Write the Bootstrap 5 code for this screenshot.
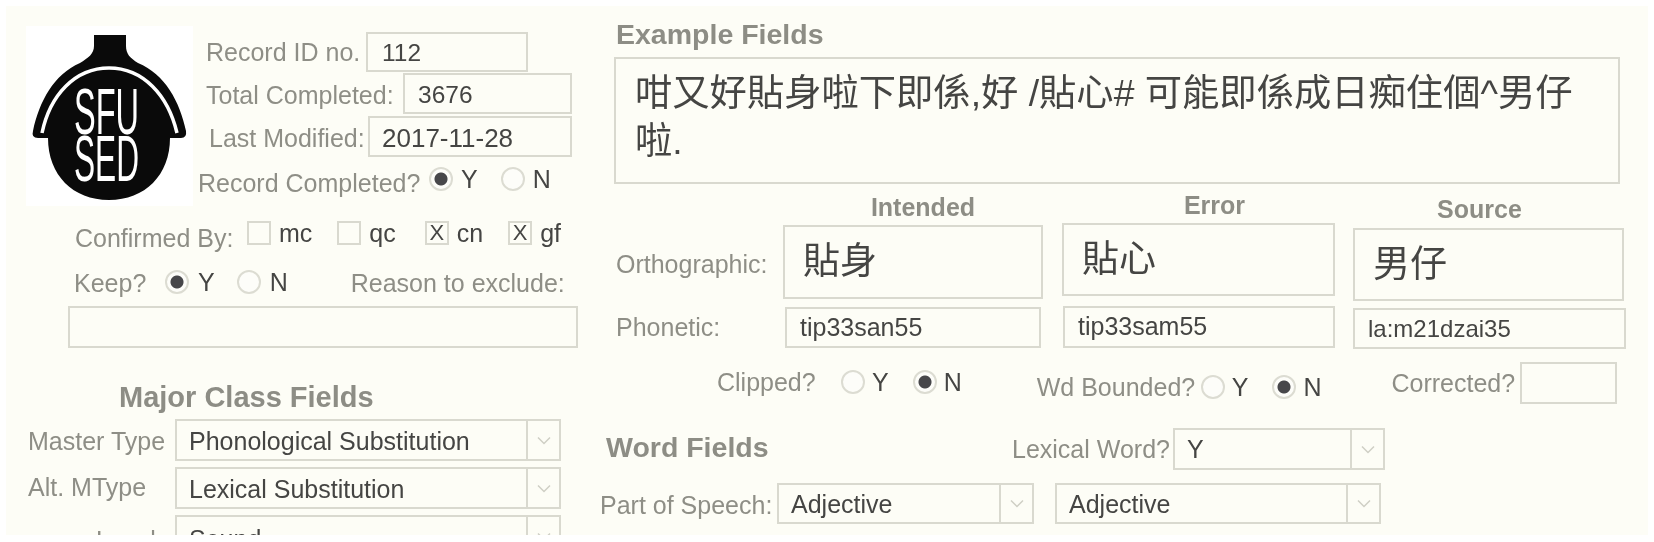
<!DOCTYPE html>
<html lang="en">
<head>
<meta charset="utf-8">
<title>SFU SED record</title>
<link href="https://cdn.jsdelivr.net/npm/bootstrap@5.3.0/dist/css/bootstrap.min.css" rel="stylesheet">
<style>
html,body{background:#fff;margin:0;overflow:hidden}
body{font-family:"Liberation Sans","Noto Sans CJK TC",sans-serif}
.sheet{margin:6px 6px 7px;height:529px;width:1642px;overflow:hidden;background:#fdfdf6;filter:blur(.5px);color:#8e8e86;font-size:25px}
.leftcol{width:590px;flex:none}
.rightcol{flex:1;min-width:0}
.lbl{white-space:nowrap;line-height:1;flex:none}
.sect{font-weight:700;font-size:28.5px;color:#8d8d85;white-space:nowrap;line-height:1}
.ctl{border:2px solid #d9d9cf;background:#fdfdf6;color:#454543;font-size:25px;display:flex;align-items:center;flex:none;white-space:nowrap;padding-left:13px}
.rd{appearance:none;width:24px;height:24px;border-radius:50%;border:2px solid #dcdcd2;background:#fdfdf9;margin:0;flex:none;display:block}
.rd:checked{background:radial-gradient(circle,#47474a 0 6px,#fdfdf9 7px)}
.val{color:#454543;line-height:1;font-size:25px;flex:none}
.bx{width:24px;height:24px;border:2px solid #d9d9cf;flex:none;color:#454543;font-size:22px;line-height:20px;text-align:center;background:#fdfdf6}
.sel{border:2px solid #d9d9cf;background:#fdfdf6;color:#454543;font-size:25px;display:flex;flex:none;white-space:nowrap;align-items:stretch}
.sel-t{flex:1;padding:2px 0 0 12px;display:flex;align-items:center;min-width:0}
.sel-c{width:33px;border-left:2px solid #d9d9cf;display:flex;align-items:center;justify-content:center;flex:none}
.logo{width:167px;height:180px;margin:20px 0 0 20px;background:#fff;flex:none;display:block}
.logo-t{font-family:"Liberation Sans",sans-serif;fill:#fff;font-size:65px}
/* left head */
.hf{flex:1;padding-top:26px}
.h1r{height:40px;padding-left:13px}.h1r .lbl{width:160px;padding-top:1px}.h1r .ctl{width:162px;height:40px;font-size:24.5px;padding:2px 0 0 14px}
.h2r{height:41px;margin-top:1px;padding-left:13px}.h2r .lbl{width:197px;padding-top:3px}.h2r .ctl{width:169px;height:41px;font-size:24.5px;padding-top:3px}
.h3r{height:41px;margin-top:2px;padding-left:16px}.h3r .lbl{width:159px;padding-top:3px}.h3r .ctl{width:204px;height:41px;font-size:26px;padding:3px 0 0 12px}
.h4r{height:34px;margin-top:5px;padding-left:5px}.h4r .lbl{width:231px;padding-top:9px}
.h4r .val{margin:0 0 0 8px}.h4r .gapn{margin-left:23px}
/* left lower */
.cfr{height:32px;margin-top:11px;padding-left:69px}.cfr .lbl{width:162px;padding-top:10px}
.cfm{margin-left:10px}.cf2{margin-left:25px}.cf3{margin-left:29px}.cf4{margin-left:25px}
.kpr{height:30px;margin-top:18px;padding-left:68px}.kpr .lbl{width:91px;padding-top:2px}
.kpr .val{margin-left:9px}.kpn{margin-left:22px}.kpx{margin-left:63px}
.rsn{height:42px;width:510px;margin:9px 0 0 62px}
.mjr{margin:30px 0 0 113px;height:41px;line-height:38px;white-space:nowrap;font-size:29px}
.lsel{height:42px;padding-left:22px}.lsel .lbl{width:147px;padding-top:2px}.lsel .sel{width:386px;height:42px}
.lsel .sel-t{padding-top:4px}
.ls2{margin-top:6px}.ls2 .lbl{padding:0 0 2px}.ls3{margin-top:6px}.ls3 .lbl{padding:8px 0 0 68px}.lsel.ls3 .sel-t{padding-top:7px}
/* right */
.ttl{height:51px;line-height:56px;padding-left:20px}
.ex{width:1006px;height:127px;margin-left:18px;border:2px solid #d9d9cf;font-size:37.3px;line-height:48px;color:#454543;padding:10px 19px}
.hdr{height:39px}
.hc{font-weight:700;font-size:25px;color:#8d8d85;line-height:42px;text-align:center;flex:none}
.hc1{width:260px;margin-left:187px;margin-top:2px;padding-left:20px}
.hc2{width:273px;margin-left:19px;padding-left:32px}
.hc3{width:271px;margin-left:18px;margin-top:4px;padding-right:18px}
.orr{height:78px;padding-left:20px}.orr .lbl{width:167px;margin-top:29px}
.big{font-size:37px;height:74px;padding-left:18px}
.o1{width:260px;margin-top:2px}.o2{width:273px;margin-left:19px;height:73px}.o3{width:271px;margin-left:18px;margin-top:5px;height:73px}
.phr{height:43px;margin-top:5px;padding-left:20px}.phr .lbl{width:169px;margin-top:9px}
.p1{width:256px;height:41px;margin-top:1px}.p2{width:272px;margin-left:22px;height:42px}.p3{width:273px;margin-left:18px;margin-top:2px;height:41px;font-size:24px}
.rdr{height:55px;position:static}
.gc{margin:17px 0 0 121px;height:32px}.gc .lbl{width:124px}
.gv{margin-left:7px}.gn{margin-left:24px}.gn2{margin-left:24px}
.gw{margin:22px 0 0 75px;height:32px}.gw .lbl{width:164px}
.gf{margin:13px 0 0 70px}.gf .lbl{width:128px}.gf .ctl{width:97px;height:42px}
.wdr{height:42px;margin-top:24px}
.wdt{margin:1px 0 0 10px;width:406px;height:36px;line-height:36px}
.lxs{width:161px}.lx{width:212px;height:42px}
.psr{height:41px;margin-top:13px;padding-left:4px}.psr .lbl{width:177px;padding-top:3px}
.ps1{width:257px;height:41px}.ps2{width:326px;height:41px;margin-left:21px}
</style>
</head>
<body>
<div class="sheet d-flex">
  <div class="leftcol">
    <div class="d-flex">
      <svg class="logo" viewBox="26 26 167 180" role="img" aria-label="SFU SED logo">
        <path fill="#0a0a0a" d="M94 35H126V46C126 54 130 58 138 63C165 74 180 102 186 131Q187 138 181 138H170C170 175 145 200 109 200C73 200 48 175 48 138H38Q31 138 33 131C39 102 54 74 80 63C88 58 94 54 94 46Z"/>
        <path fill="none" stroke="#fff" stroke-width="3.5" d="M42 133C50 95 75 68 109 68C143 68 168 95 177 133"/>
        <text class="logo-t" x="74" y="134" textLength="65" lengthAdjust="spacingAndGlyphs">SFU</text>
        <text class="logo-t" x="74" y="181" textLength="65" lengthAdjust="spacingAndGlyphs">SED</text>
      </svg>
      <div class="hf">
        <div class="d-flex align-items-center h1r"><span class="lbl">Record ID no.</span><div class="ctl">112</div></div>
        <div class="d-flex align-items-center h2r"><span class="lbl">Total Completed:</span><div class="ctl">3676</div></div>
        <div class="d-flex align-items-center h3r"><span class="lbl">Last Modified:</span><div class="ctl">2017-11-28</div></div>
        <div class="d-flex align-items-center h4r"><span class="lbl">Record Completed?</span><input class="rd" type="radio" name="a" checked aria-label="Y"><span class="val">Y</span><input class="rd gapn" type="radio" name="a" aria-label="N"><span class="val">N</span></div>
      </div>
    </div>
    <div class="d-flex align-items-center cfr"><span class="lbl">Confirmed By:</span>
      <span class="bx cfm"></span><span class="val ms-2">mc</span>
      <span class="bx cf2"></span><span class="val ms-2">qc</span>
      <span class="bx cf3">X</span><span class="val ms-2">cn</span>
      <span class="bx cf4">X</span><span class="val ms-2">gf</span></div>
    <div class="d-flex align-items-center kpr"><span class="lbl">Keep?</span><input class="rd" type="radio" name="b" checked aria-label="Y"><span class="val">Y</span><input class="rd kpn" type="radio" name="b" aria-label="N"><span class="val">N</span><span class="lbl kpx">Reason to exclude:</span></div>
    <div class="ctl rsn"></div>
    <div class="sect mjr">Major Class Fields</div>
    <div class="d-flex align-items-center lsel"><span class="lbl">Master Type</span><div class="sel"><span class="sel-t">Phonological Substitution</span><span class="sel-c"><svg width="14" height="9" viewBox="0 0 14 9"><path d="M1 1.5 7 7.5 13 1.5" fill="none" stroke="#cfcfc5" stroke-width="1.5"/></svg></span></div></div>
    <div class="d-flex align-items-center lsel ls2"><span class="lbl">Alt. MType</span><div class="sel"><span class="sel-t">Lexical Substitution</span><span class="sel-c"><svg width="14" height="9" viewBox="0 0 14 9"><path d="M1 1.5 7 7.5 13 1.5" fill="none" stroke="#cfcfc5" stroke-width="1.5"/></svg></span></div></div>
    <div class="d-flex align-items-center lsel ls3"><span class="lbl">Level</span><div class="sel"><span class="sel-t">Sound</span><span class="sel-c"><svg width="14" height="9" viewBox="0 0 14 9"><path d="M1 1.5 7 7.5 13 1.5" fill="none" stroke="#cfcfc5" stroke-width="1.5"/></svg></span></div></div>
  </div>
  <div class="rightcol">
    <div class="sect ttl">Example Fields</div>
    <div class="ex">咁又好貼身啦下即係,好 /貼心# 可能即係成日痴住個^男仔啦.</div>
    <div class="d-flex hdr"><div class="hc hc1">Intended</div><div class="hc hc2">Error</div><div class="hc hc3">Source</div></div>
    <div class="d-flex align-items-start orr"><span class="lbl">Orthographic:</span><div class="ctl big o1">貼身</div><div class="ctl big o2">貼心</div><div class="ctl big o3">男仔</div></div>
    <div class="d-flex align-items-start phr"><span class="lbl">Phonetic:</span><div class="ctl p1">tip33san55</div><div class="ctl p2">tip33sam55</div><div class="ctl p3">la:m21dzai35</div></div>
    <div class="d-flex align-items-start rdr">
      <div class="d-flex align-items-center gc"><span class="lbl">Clipped?</span><input class="rd" type="radio" name="c" aria-label="Y"><span class="val gv">Y</span><input class="rd gn" type="radio" name="c" checked aria-label="N"><span class="val gv">N</span></div>
      <div class="d-flex align-items-center gw"><span class="lbl">Wd Bounded?</span><input class="rd" type="radio" name="d" aria-label="Y"><span class="val gv">Y</span><input class="rd gn2" type="radio" name="d" checked aria-label="N"><span class="val gv">N</span></div>
      <div class="d-flex align-items-center gf"><span class="lbl">Corrected?</span><div class="ctl"></div></div>
    </div>
    <div class="d-flex align-items-start wdr"><div class="sect wdt">Word Fields</div><div class="d-flex align-items-center"><span class="lbl lxs">Lexical Word?</span><div class="sel lx"><span class="sel-t">Y</span><span class="sel-c"><svg width="14" height="9" viewBox="0 0 14 9"><path d="M1 1.5 7 7.5 13 1.5" fill="none" stroke="#cfcfc5" stroke-width="1.5"/></svg></span></div></div></div>
    <div class="d-flex align-items-center psr"><span class="lbl">Part of Speech:</span><div class="sel ps1"><span class="sel-t">Adjective</span><span class="sel-c"><svg width="14" height="9" viewBox="0 0 14 9"><path d="M1 1.5 7 7.5 13 1.5" fill="none" stroke="#cfcfc5" stroke-width="1.5"/></svg></span></div><div class="sel ps2"><span class="sel-t">Adjective</span><span class="sel-c"><svg width="14" height="9" viewBox="0 0 14 9"><path d="M1 1.5 7 7.5 13 1.5" fill="none" stroke="#cfcfc5" stroke-width="1.5"/></svg></span></div></div>
  </div>
</div>
<script src="https://cdn.jsdelivr.net/npm/bootstrap@5.3.0/dist/js/bootstrap.bundle.min.js"></script>
</body>
</html>
